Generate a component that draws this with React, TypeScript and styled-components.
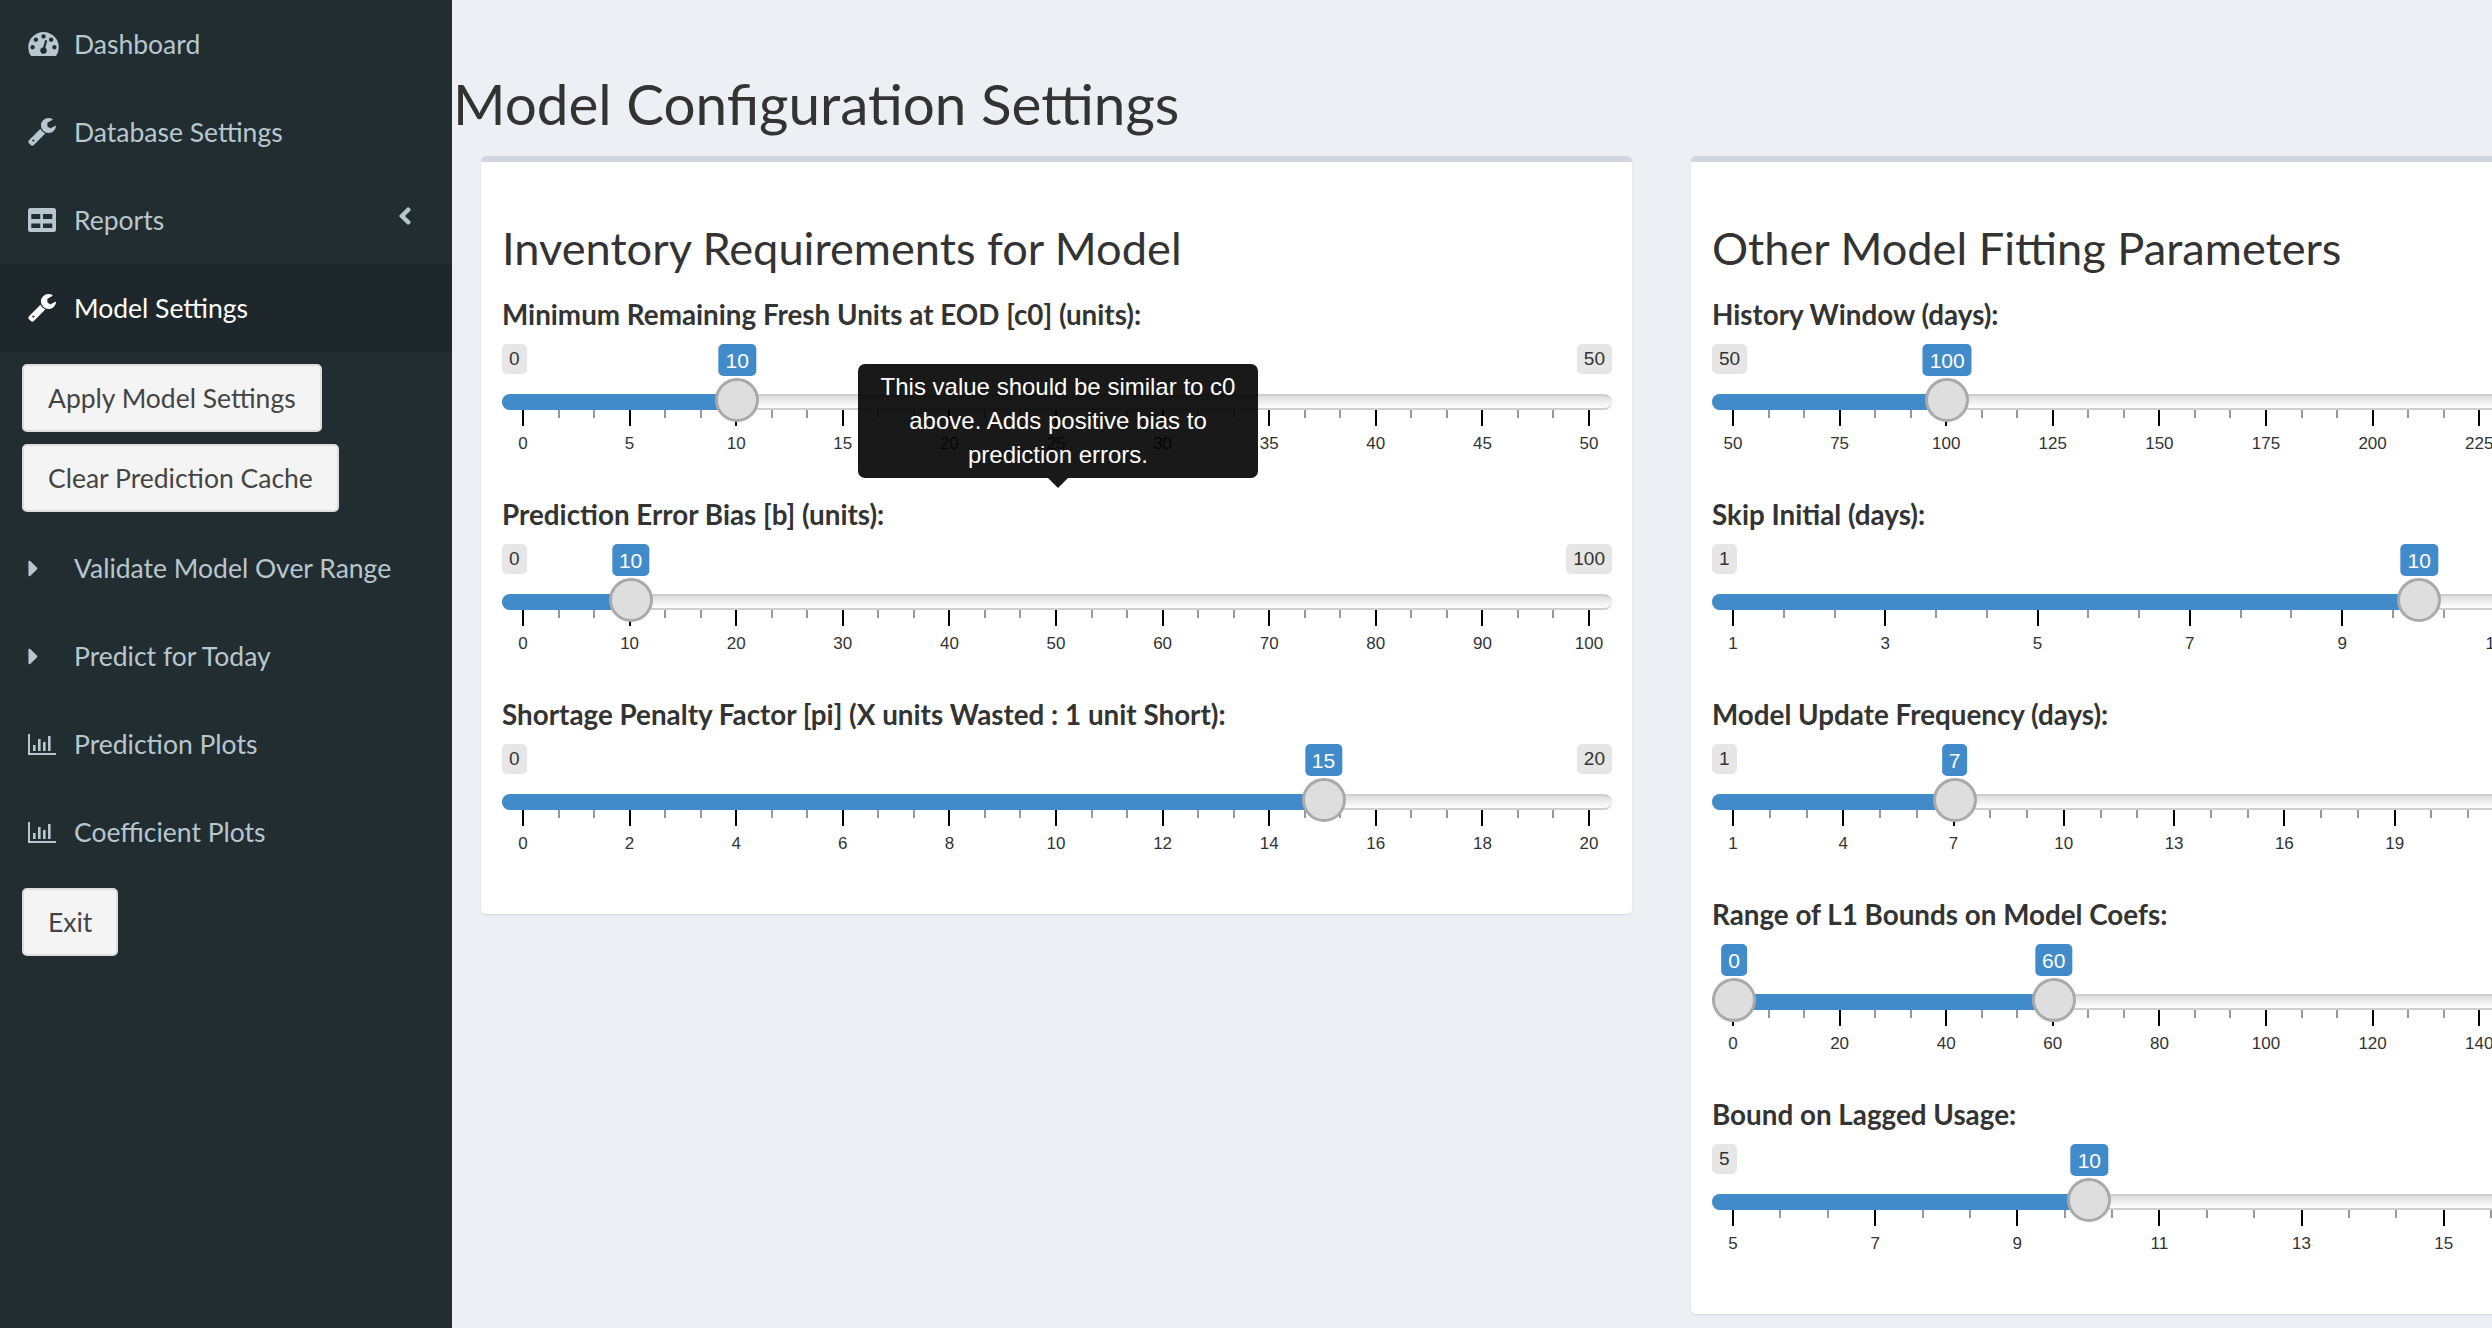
import React from 'react';
import styled, { createGlobalStyle } from 'styled-components';
import { FaCaretRight, FaAngleLeft } from 'react-icons/fa';

const UI_FONT = `Lato, "Noto Sans", sans-serif`;
const NUM_FONT = `"Liberation Sans", Arial, sans-serif`;

// slider scale in px, measured from the left of the slider
const GRID_START = 21;
const GRID_WIDTH = 1066;
const HANDLE_START = 22;

const GlobalStyle = createGlobalStyle`
  html, body {
    margin: 0;
    height: 100%;
    overflow: hidden;
    background: #ecf0f5;
    font-family: ${UI_FONT};
  }
`;

const Page = styled.div`
  display: flex;
  width: 2492px;
  height: 1328px;
  overflow: hidden;
`;

const Sidebar = styled.nav`
  flex: 0 0 452px;
  display: flex;
  flex-direction: column;
  background: #222d32;
`;

const MenuItem = styled.a<{ $active?: boolean; $gap?: number }>`
  display: flex;
  align-items: center;
  height: 88px;
  margin-top: ${({ $gap }) => $gap ?? 0}px;
  padding-left: 28px;
  font-size: 26.5px;
  color: ${({ $active }) => ($active ? '#fff' : '#b8c7ce')};
  background: ${({ $active }) => ($active ? '#1e282c' : 'transparent')};
`;

const IconSlot = styled.span`
  flex: 0 0 46px;
  display: flex;
  align-items: center;
  svg { display: block; }
`;

const MenuArrow = styled.span`
  margin: -8px 33px 0 auto;
  display: flex;
  align-items: center;
`;

const Caret = styled(FaCaretRight)`
  margin-left: -8px;
`;

const ButtonWrap = styled.div`
  padding: 12px 22px 0;
`;

const SideButton = styled.button`
  display: block;
  height: 68px;
  padding: 0 24px;
  font-family: ${UI_FONT};
  font-size: 26.5px;
  color: #444;
  background: #f4f4f4;
  border: 2px solid #ddd;
  border-radius: 5px;
`;

const Main = styled.main`
  flex: 1;
  min-width: 0;
  overflow: hidden;
`;

const Title = styled.h1`
  margin: 0;
  padding: 74px 0 0 1px;
  height: 82px;
  line-height: 58px;
  font-size: 56.6px;
  font-weight: 400;
  color: #333;
  white-space: nowrap;
`;

const Cards = styled.div`
  display: flex;
  align-items: flex-start;
  gap: 59px;
  padding-left: 29px;
`;

const Card = styled.section`
  flex: 0 0 1151px;
  box-sizing: border-box;
  padding: 60px 20px 16px 21px;
  background: #fff;
  border-top: 6px solid #d2d6de;
  border-radius: 5px;
  box-shadow: 0 1px 2px rgba(0, 0, 0, 0.1);
`;

const CardTitle = styled.h3`
  margin: 0 0 24px;
  line-height: 52px;
  font-size: 45.2px;
  font-weight: 400;
  color: #333;
  white-space: nowrap;
`;

const Field = styled.div`
  position: relative;
  height: 200px;
`;

const FieldLabel = styled.label`
  display: block;
  height: 34px;
  margin-bottom: 12px;
  line-height: 34px;
  font-size: 27.8px;
  font-weight: 700;
  color: #333;
  white-space: nowrap;
`;

const Slider = styled.div`
  position: relative;
  height: 154px;
  font-family: ${NUM_FONT};
`;

const Badge = styled.span<{ $value?: boolean }>`
  position: absolute;
  top: 0;
  height: ${({ $value }) => ($value ? 32 : 30)}px;
  padding: 0 7px;
  line-height: ${({ $value }) => ($value ? 33 : 30)}px;
  font-size: ${({ $value }) => ($value ? 21 : 19)}px;
  border-radius: 5px;
  color: ${({ $value }) => ($value ? '#fff' : '#333')};
  background: ${({ $value }) => ($value ? '#428bca' : '#e6e6e6')};
  white-space: nowrap;
`;

const Track = styled.div`
  position: absolute;
  top: 50px;
  left: 0;
  right: 0;
  height: 16px;
  box-sizing: border-box;
  border-top: 2px solid #cfcfcf;
  border-bottom: 2px solid #cfcfcf;
  border-radius: 8px;
  background: linear-gradient(to bottom, #dedede, #ffffff);
`;

const Bar = styled.div<{ $rounded: boolean }>`
  position: absolute;
  top: 50px;
  height: 16px;
  background: #428bca;
  border-radius: ${({ $rounded }) => ($rounded ? '8px 0 0 8px' : '0')};
`;

const Handle = styled.span`
  position: absolute;
  top: 34px;
  width: 44px;
  height: 44px;
  box-sizing: border-box;
  margin-left: -22px;
  border: 3px solid #aaa;
  border-radius: 50%;
  background: #dedede;
  z-index: 2;
`;

const Tick = styled.span<{ $major?: boolean }>`
  position: absolute;
  top: 66px;
  width: 2px;
  margin-left: -1px;
  height: ${({ $major }) => ($major ? 16 : 8)}px;
  background: ${({ $major }) => ($major ? '#000' : '#999')};
`;

const TickLabel = styled.span`
  position: absolute;
  top: 90px;
  line-height: 20px;
  font-size: 17px;
  color: #333;
  transform: translateX(-50%);
`;

const Tooltip = styled.div`
  position: absolute;
  top: -134px;
  left: 356px;
  width: 400px;
  height: 114px;
  box-sizing: border-box;
  padding: 6px 20px;
  font-family: ${NUM_FONT};
  font-size: 24px;
  line-height: 34px;
  text-align: center;
  color: #fff;
  background: rgba(0, 0, 0, 0.9);
  border-radius: 7px;
  z-index: 5;
  &::after {
    content: '';
    position: absolute;
    top: 100%;
    left: 50%;
    margin-left: -10px;
    border-style: solid;
    border-width: 10px 10px 0;
    border-color: rgba(0, 0, 0, 0.9) transparent transparent;
  }
`;

function DashboardIcon({ color }: { color: string }) {
  return (
    <svg width="31" height="24" viewBox="0 256 1792 1408" fill={color}>
      <path d="M384 1152q0-53-37.5-90.5t-90.5-37.5-90.5 37.5-37.5 90.5 37.5 90.5 90.5 37.5 90.5-37.5 37.5-90.5zm192-448q0-53-37.5-90.5t-90.5-37.5-90.5 37.5-37.5 90.5 37.5 90.5 90.5 37.5 90.5-37.5 37.5-90.5zm428 481l101-382q6-26-7.5-48.5t-38.5-29.5-48 6.5-30 39.5l-101 382q-60 5-107 43.5t-63 98.5q-20 77 20 146t117 89 146-20 89-117q16-60-6-117t-72-91zm660-33q0-53-37.5-90.5t-90.5-37.5-90.5 37.5-37.5 90.5 37.5 90.5 90.5 37.5 90.5-37.5 37.5-90.5zm-640-640q0-53-37.5-90.5t-90.5-37.5-90.5 37.5-37.5 90.5 37.5 90.5 90.5 37.5 90.5-37.5 37.5-90.5zm448 192q0-53-37.5-90.5t-90.5-37.5-90.5 37.5-37.5 90.5 37.5 90.5 90.5 37.5 90.5-37.5 37.5-90.5zm320 448q0 261-141 483-19 29-54 29h-1402q-35 0-54-29-141-221-141-483 0-182 71-348t191-286 286-191 348-71 348 71 286 191 191 286 71 348z" />
    </svg>
  );
}

function WrenchIcon({ color }: { color: string }) {
  return (
    <svg width="28" height="28" viewBox="64 128 1664 1664" fill={color}>
      <path d="M448 1472q0-26-19-45t-45-19-45 19-19 45 19 45 45 19 45-19 19-45zm644-420l-682 682q-37 37-90 37-52 0-91-37l-106-108q-38-36-38-90 0-53 38-91l681-681q39 98 114.5 173.5t173.5 114.5zm634-435q0 39-23 106-47 134-164.5 217.5t-258.5 83.5q-185 0-316.5-131.5t-131.5-316.5 131.5-316.5 316.5-131.5q58 0 121.5 16.5t107.5 46.5q16 11 16 28t-16 28l-293 169v224l193 107q5-3 79-48.5t135.5-81 70.5-35.5q15 0 23.5 10t8.5 25z" />
    </svg>
  );
}

function TableIcon({ color }: { color: string }) {
  return (
    <svg width="28" height="24" viewBox="0 0 28 24">
      <path
        fillRule="evenodd"
        fill={color}
        d="M2.5 0h23A2.5 2.5 0 0 1 28 2.5v19a2.5 2.5 0 0 1-2.5 2.5h-23A2.5 2.5 0 0 1 0 21.500v-19A2.500 2.500 0 0 1 2.500 0ZM3.300 6v5h9v-5h-9ZM15 6v5h9.300v-5H15ZM3.300 15.500V20h9v-4.500h-9ZM15 15.500V20h9.300v-4.500H15Z"
      />
    </svg>
  );
}

function ChartIcon({ color }: { color: string }) {
  return (
    <svg width="28" height="21" viewBox="0 0 28 21" fill={color}>
      <path d="M0 0h2v19h26v2H0V0Z" />
      <rect x="5" y="11" width="2.6" height="6" />
      <rect x="10" y="5" width="2.6" height="12" />
      <rect x="15" y="8" width="2.6" height="9" />
      <rect x="20" y="2" width="2.6" height="15" />
    </svg>
  );
}

type SliderConfig = {
  label: string;
  min: number;
  max: number;
  step: number;
  from?: number;
  to: number;
};

const leftSliders: SliderConfig[] = [
  { label: 'Minimum Remaining Fresh Units at EOD [c0] (units):', min: 0, max: 50, step: 5, to: 10 },
  { label: 'Prediction Error Bias [b] (units):', min: 0, max: 100, step: 10, to: 10 },
  { label: 'Shortage Penalty Factor [pi] (X units Wasted : 1 unit Short):', min: 0, max: 20, step: 2, to: 15 },
];

const rightSliders: SliderConfig[] = [
  { label: 'History Window (days):', min: 50, max: 300, step: 25, to: 100 },
  { label: 'Skip Initial (days):', min: 1, max: 15, step: 2, to: 10 },
  { label: 'Model Update Frequency (days):', min: 1, max: 30, step: 3, to: 7 },
  { label: 'Range of L1 Bounds on Model Coefs:', min: 0, max: 200, step: 20, from: 0, to: 60 },
  { label: 'Bound on Lagged Usage:', min: 5, max: 20, step: 2, to: 10 },
];

function SliderField({ cfg, children }: { cfg: SliderConfig; children?: React.ReactNode }) {
  const { min, max, step, from, to, label } = cfg;
  const isRange = from !== undefined;
  const frac = (v: number) => (v - min) / (max - min);
  const handleX = (v: number) => HANDLE_START + frac(v) * GRID_WIDTH;
  const gridX = (v: number) => GRID_START + frac(v) * GRID_WIDTH;

  const majors: number[] = [];
  for (let v = min; v <= max; v += step) majors.push(v);
  const minors: number[] = [];
  majors.forEach((v) => {
    [1, 2].forEach((k) => {
      const m = v + (step * k) / 3;
      if (m < max) minors.push(m);
    });
  });

  const barStart = isRange ? handleX(from as number) : 0;

  return (
    <Field>
      <FieldLabel>{label}</FieldLabel>
      <Slider>
        <Track />
        <Bar $rounded={!isRange} style={{ left: barStart, width: handleX(to) - barStart }} />
        {majors.map((v) => (
          <React.Fragment key={v}>
            <Tick $major style={{ left: gridX(v) }} />
            <TickLabel style={{ left: gridX(v) }}>{v}</TickLabel>
          </React.Fragment>
        ))}
        {minors.map((v) => (
          <Tick key={v} style={{ left: gridX(v) }} />
        ))}
        {!isRange && <Badge style={{ left: 0 }}>{min}</Badge>}
        {!isRange && <Badge style={{ right: 0 }}>{max}</Badge>}
        {isRange && (
          <Badge $value style={{ left: handleX(from as number), transform: 'translateX(-50%)' }}>
            {from}
          </Badge>
        )}
        <Badge $value style={{ left: handleX(to), transform: 'translateX(-50%)' }}>
          {to}
        </Badge>
        {isRange && <Handle style={{ left: handleX(from as number) }} />}
        <Handle style={{ left: handleX(to) }} />
      </Slider>
      {children}
    </Field>
  );
}

const MUTED = '#b8c7ce';

export default function App() {
  return (
    <Page>
      <GlobalStyle />
      <Sidebar>
        <MenuItem>
          <IconSlot><DashboardIcon color={MUTED} /></IconSlot>
          Dashboard
        </MenuItem>
        <MenuItem>
          <IconSlot><WrenchIcon color={MUTED} /></IconSlot>
          Database Settings
        </MenuItem>
        <MenuItem>
          <IconSlot><TableIcon color={MUTED} /></IconSlot>
          Reports
          <MenuArrow><FaAngleLeft size={28} color={MUTED} /></MenuArrow>
        </MenuItem>
        <MenuItem $active>
          <IconSlot><WrenchIcon color="#fff" /></IconSlot>
          Model Settings
        </MenuItem>
        <ButtonWrap><SideButton>Apply Model Settings</SideButton></ButtonWrap>
        <ButtonWrap><SideButton>Clear Prediction Cache</SideButton></ButtonWrap>
        <MenuItem $gap={12}>
          <IconSlot><Caret size={27} color={MUTED} /></IconSlot>
          Validate Model Over Range
        </MenuItem>
        <MenuItem>
          <IconSlot><Caret size={27} color={MUTED} /></IconSlot>
          Predict for Today
        </MenuItem>
        <MenuItem>
          <IconSlot><ChartIcon color={MUTED} /></IconSlot>
          Prediction Plots
        </MenuItem>
        <MenuItem>
          <IconSlot><ChartIcon color={MUTED} /></IconSlot>
          Coefficient Plots
        </MenuItem>
        <ButtonWrap><SideButton>Exit</SideButton></ButtonWrap>
      </Sidebar>
      <Main>
        <Title>Model Configuration Settings</Title>
        <Cards>
          <Card>
            <CardTitle>Inventory Requirements for Model</CardTitle>
            {leftSliders.map((cfg, i) => (
              <SliderField key={cfg.label} cfg={cfg}>
                {i === 1 && (
                  <Tooltip>This value should be similar to c0 above. Adds positive bias to prediction errors.</Tooltip>
                )}
              </SliderField>
            ))}
          </Card>
          <Card>
            <CardTitle>Other Model Fitting Parameters</CardTitle>
            {rightSliders.map((cfg) => (
              <SliderField key={cfg.label} cfg={cfg} />
            ))}
          </Card>
        </Cards>
      </Main>
    </Page>
  );
}
